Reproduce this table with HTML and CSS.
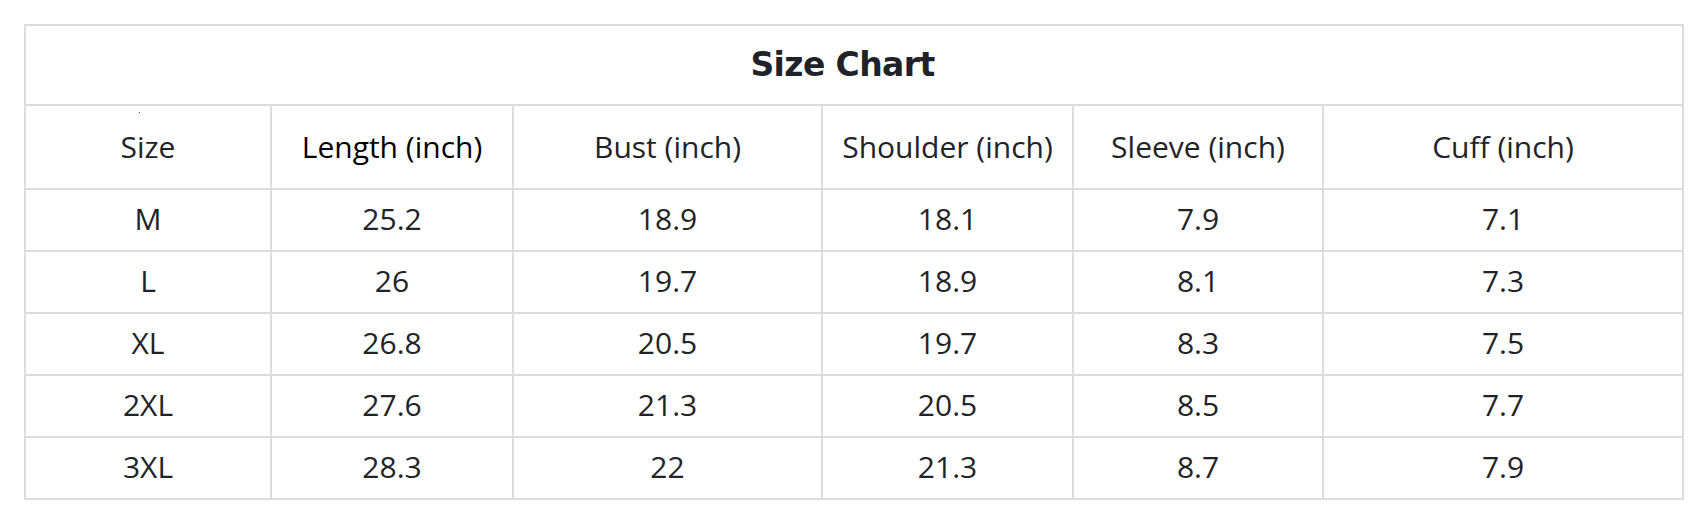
FILE: index.html
```html
<!DOCTYPE html>
<html lang="en">
<head>
<meta charset="utf-8">
<title>Size Chart</title>
<link rel="stylesheet" href="styles.css">
</head>
<body>
<div class="page">
  <div class="chart">
    <div class="cell title">Size Chart</div>
    <div class="cell head first">Size</div>
    <div class="cell head dark">Length (inch)</div>
    <div class="cell head">Bust (inch)</div>
    <div class="cell head">Shoulder (inch)</div>
    <div class="cell head">Sleeve (inch)</div>
    <div class="cell head">Cuff (inch)</div>

    <div class="cell">M</div><div class="cell">25.2</div><div class="cell">18.9</div><div class="cell">18.1</div><div class="cell">7.9</div><div class="cell">7.1</div>
    <div class="cell">L</div><div class="cell">26</div><div class="cell">19.7</div><div class="cell">18.9</div><div class="cell">8.1</div><div class="cell">7.3</div>
    <div class="cell">XL</div><div class="cell">26.8</div><div class="cell">20.5</div><div class="cell">19.7</div><div class="cell">8.3</div><div class="cell">7.5</div>
    <div class="cell">2XL</div><div class="cell">27.6</div><div class="cell">21.3</div><div class="cell">20.5</div><div class="cell">8.5</div><div class="cell">7.7</div>
    <div class="cell">3XL</div><div class="cell">28.3</div><div class="cell">22</div><div class="cell">21.3</div><div class="cell">8.7</div><div class="cell">7.9</div>
  </div>
</div>
</body>
</html>
```

FILE: styles.css
```css
html, body {
  margin: 0;
  padding: 0;
  background: #ffffff;
}

.page {
  padding: 24px 0 0 24px;
}

.chart {
  display: grid;
  width: 1656px;
  grid-template-columns: 244px 240px 307px 249px 248px 358px;
  grid-template-rows: 78px 82px 60px 60px 60px 60px 60px;
  gap: 2px;
  padding: 2px;
  background: #dcdcdc;
  font-family: "Open Sans", "Noto Sans", "Liberation Sans", sans-serif;
  font-size: 30px;
  color: #222327;
}

.cell {
  background: #ffffff;
  display: flex;
  align-items: center;
  justify-content: center;
  white-space: nowrap;
  padding-bottom: 3px;
}

.title {
  grid-column: 1 / -1;
  padding-right: 23px;
  padding-bottom: 2px;
  font-family: "DejaVu Sans", "Liberation Sans", sans-serif;
  font-weight: 700;
  font-size: 33px;
  letter-spacing: -0.6px;
  color: #1f2329;
}

.head {
  padding-bottom: 2px;
}

.head.dark {
  color: #000000;
}

.head.first {
  position: relative;
}

.head.first::before {
  content: "";
  position: absolute;
  left: 113px;
  top: 6px;
  width: 1px;
  height: 1px;
  background: #444;
}
```
